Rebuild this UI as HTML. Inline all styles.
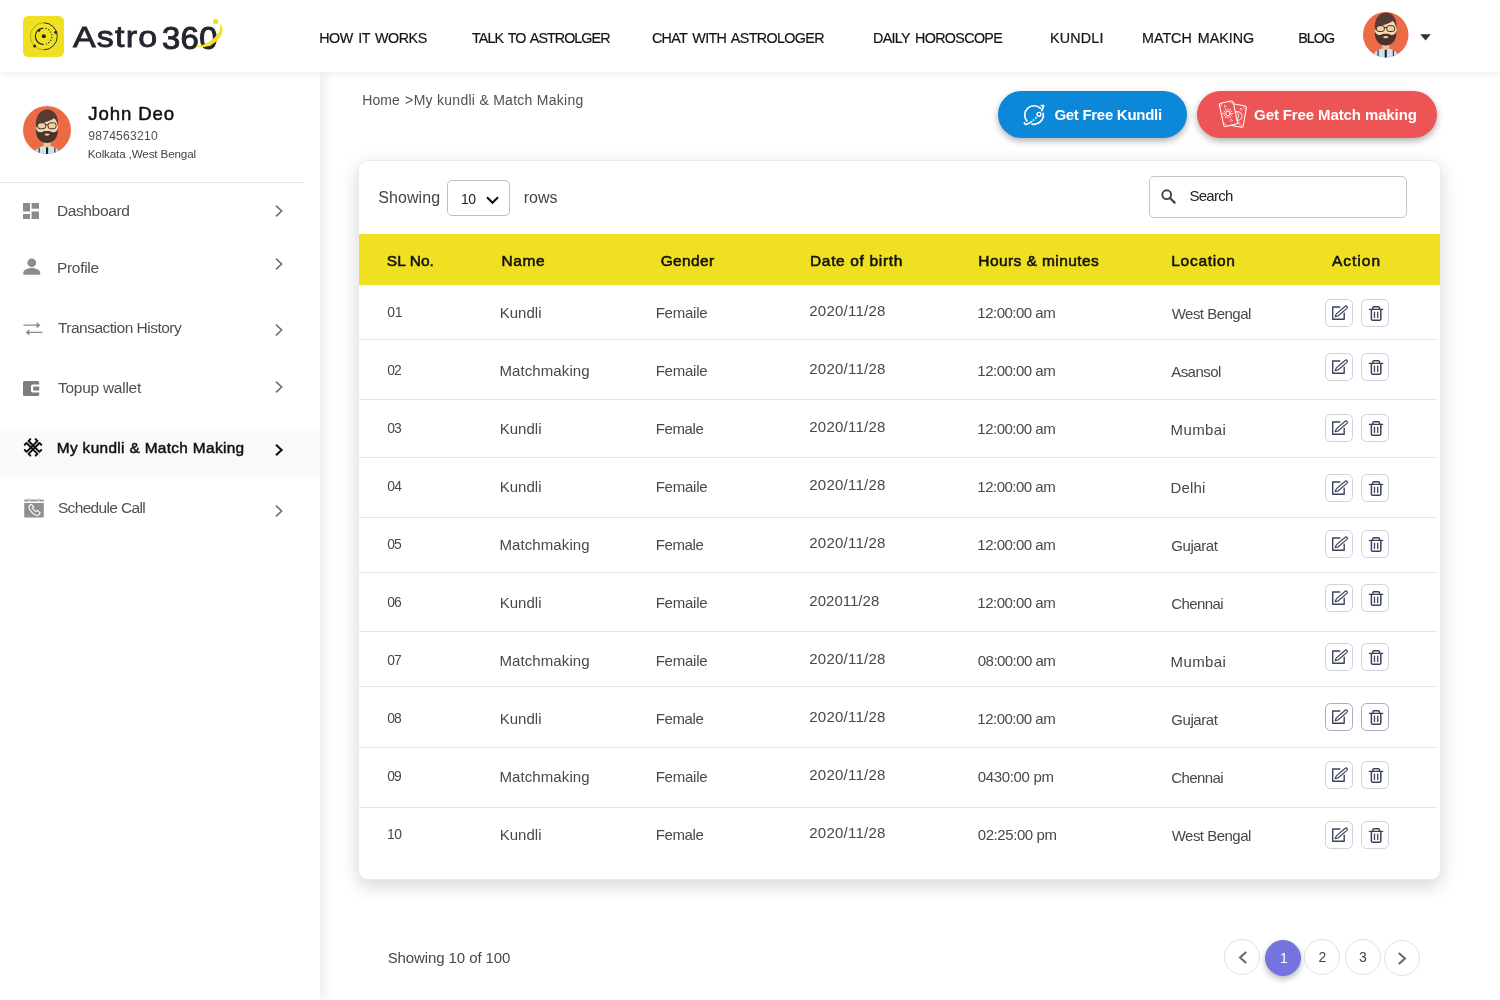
<!DOCTYPE html>
<html lang="en"><head><meta charset="utf-8"><title>Astro 360 - My kundli &amp; Match Making</title>
<style>
*{box-sizing:border-box;margin:0;padding:0}
html,body{width:1500px;height:1000px;overflow:hidden;background:#fff}
body{position:relative;font-family:"Liberation Sans",sans-serif;color:#444}
.t{position:absolute;white-space:nowrap;line-height:1;display:block;text-decoration:none}
.abs{position:absolute}
#side{position:absolute;left:0;top:72px;width:320px;height:928px;background:#fff;box-shadow:4px 0 12px rgba(0,0,0,.08)}
#head{position:absolute;left:0;top:0;width:1500px;height:72px;background:#fff;box-shadow:0 2px 7px rgba(0,0,0,.07)}
#sep{position:absolute;left:0;top:182px;width:304px;height:1px;background:#e4e4e4}
#active{position:absolute;left:0;top:429px;width:320px;height:48px;background:#f9f9f9}
#card{position:absolute;left:358px;top:160px;width:1083px;height:720px;background:#fff;border:1px solid #ececec;border-radius:10px;box-shadow:0 6px 18px rgba(0,0,0,.17)}
#thead{position:absolute;left:359px;top:234px;width:1081px;height:51px;background:#f0e022}
.rl{position:absolute;left:359px;width:1078px;height:1px;background:#e3e4e8}
.btn{position:absolute;height:47px;border-radius:24px;top:91px}
#b1{left:998px;width:189px;background:#0d87d8;box-shadow:0 3px 7px rgba(0,0,0,.32)}
#b2{left:1197px;width:240px;background:#ec5456;box-shadow:0 3px 7px rgba(0,0,0,.32)}
#sel{position:absolute;left:447px;top:180px;width:63px;height:36px;border:1px solid #bebebe;border-radius:5px;background:#fff}
#search{position:absolute;left:1149px;top:176px;width:258px;height:42px;border:1px solid #c6c6c6;border-radius:5px;background:#fff}
.ab{position:absolute;width:28px;height:28px;border:1px solid #cfd2dc;border-radius:5.5px;background:#fff}
.ab.dk{border-color:#a9adbb}
.pg{position:absolute;width:36px;height:36px;border-radius:50%;border:1px solid #e0e0e0;background:#fff}
.pg.on{background:#7473e0;border-color:#7473e0;box-shadow:0 3px 6px rgba(0,0,0,.28)}
svg{position:absolute;overflow:visible}
#tx{position:absolute;left:0;top:0;width:1500px;height:1000px;will-change:transform}

</style></head>
<body>
<div id="side"></div>
<div id="active"></div>
<div id="sep"></div>
<svg style="left:23px;top:106px" width="48" height="48" viewBox="0 0 48 48">
<defs><clipPath id="cpa"><circle cx="24" cy="24" r="24"/></clipPath></defs>
<circle cx="24" cy="24" r="24" fill="#ec6b47"/>
<g clip-path="url(#cpa)"><g transform="translate(0.9 2.9) scale(0.965)">
<path d="M10.5 54V49C10.5 42 16 38.2 24 38.2S37.5 42 37.5 49V54Z" fill="#cfe0ee"/>
<rect x="15.2" y="40.2" width="1.4" height="12" fill="#3d4a5c"/><rect x="31.4" y="40.2" width="1.4" height="12" fill="#3d4a5c"/>
<path d="M20.2 31h7.6v6.6L24 40.6l-3.8-3Z" fill="#f2c596"/>
<rect x="22.9" y="39.8" width="2.2" height="13" fill="#20222a"/>
<ellipse cx="23.8" cy="18.5" rx="11.5" ry="15.5" fill="#f8dab0"/>
<path d="M12.5 19.5C11.2 7 17.3 0.6 24 0.6 31.5 0.6 36.6 7 35.2 18.5 34.8 13.8 33.2 11.2 31.2 9.6 26.5 13.8 17.6 13.2 12.5 19.5Z" fill="#573b34"/>
<path d="M12.4 19.5C12 30 16.6 35.3 23.8 35.3S35.7 30 35.3 19.5C34.6 23 32.3 24.8 29.4 24.2 27.4 22.4 20.4 22.4 18.4 24.2 15.5 24.8 13.1 23 12.4 19.5Z" fill="#4b332d"/>
<ellipse cx="24" cy="26.6" rx="2.7" ry="1.15" fill="#f6c9a0"/>
<rect x="14.2" y="14.4" width="8.4" height="6.2" rx="2.6" fill="#f1cf9f" stroke="#2b2321" stroke-width="0.95"/>
<rect x="25" y="14.4" width="8.4" height="6.2" rx="2.6" fill="#f1cf9f" stroke="#2b2321" stroke-width="0.95"/>
<path d="M22.6 16.4h2.4" stroke="#2b2321" stroke-width="1.1"/>
</g></g></svg>
<svg style="left:23px;top:203px" width="16" height="16" viewBox="0 0 16 16"><path d="M0 0h7v8.6H0zM0 11h7v5H0zM8.6 0H16v5.8H8.6zM8.6 8.4H16V16H8.6z" fill="#8b8b8b"/></svg>
<svg style="left:22.6px;top:257.6px" width="17.5" height="17.5" viewBox="0 0 18 18"><circle cx="9" cy="4.9" r="4.5" fill="#8b8b8b"/><path d="M0.3 17.3V15.2C0.3 11.8 5.5 10.2 9 10.2S17.7 11.8 17.7 15.2V17.3Z" fill="#8b8b8b"/></svg>
<svg style="left:22.5px;top:320px" width="20" height="18" viewBox="0 0 20 18"><path d="M0.5 5.2H15M4.5 12.4H19.5" stroke="#8b8b8b" stroke-width="1.3" fill="none"/><path d="M13.6 2 17.4 5.2 13.6 8.4ZM6.4 9.2 2.6 12.4 6.4 15.6Z" fill="#8b8b8b"/></svg>
<svg style="left:22.8px;top:381px" width="17" height="16" viewBox="0 0 17 16"><path d="M1.6 0H14.6Q16.2 0 16.2 1.6V3.6H9.6Q8 3.6 8 5.2V9.8Q8 11.4 9.6 11.4H16.2V13.4Q16.2 15 14.6 15H1.6Q0 15 0 13.4V1.6Q0 0 1.6 0Z" fill="#7d7d7d"/><rect x="10.2" y="5.6" width="6" height="3.9" fill="#7d7d7d"/></svg>
<svg style="left:23px;top:437px" width="20" height="20" viewBox="0 0 20 20"><g transform="translate(10 10.4) rotate(45)" fill="none" stroke="#111" stroke-width="1.95" stroke-linejoin="round" stroke-linecap="round"><path d="M-7.7 -4.0V-1.4H7.7V-4.0"/><path d="M-4.0 -7.7H-1.4V7.7H-4.0"/><path d="M-7.7 4.0V1.4H7.7V4.0"/><path d="M4.0 -7.7H1.4V7.7H4.0"/></g></svg>
<svg style="left:24px;top:498px" width="20" height="20" viewBox="0 0 20 20"><path d="M1 1.5H19Q19.8 1.5 19.8 2.3V3.6H0.2V2.3Q0.2 1.5 1 1.5Z" fill="#9a9a9a"/><path d="M5.4 0.1V1.5M14.5 0.1V1.5" stroke="#a8a8a8" stroke-width="0.9"/><path d="M5.4 1.5V3.7M14.5 1.5V3.7" stroke="#fff" stroke-width="0.9"/><path d="M0.2 5H19.8V18.8Q19.8 19.6 19 19.6H1Q0.2 19.6 0.2 18.8Z" fill="#909090"/><path d="M7.4 6.4 9.7 8.7 8.4 10.1Q9.6 12.4 11.9 13.6L13.4 12.4 16.1 14.9Q15.4 17.1 13.2 17.5 8.6 16.6 5.5 11 4.6 8.6 5.4 7.6Z" fill="none" stroke="#fff" stroke-width="1.15" stroke-linejoin="round"/></svg>
<svg style="left:274.6px;top:205.2px" width="8" height="12" viewBox="0 0 8 12"><path d="M1 0.7 6.6 6 1 11.3" fill="none" stroke="#737373" stroke-width="1.7"/></svg>
<svg style="left:274.6px;top:257.8px" width="8" height="12" viewBox="0 0 8 12"><path d="M1 0.7 6.6 6 1 11.3" fill="none" stroke="#737373" stroke-width="1.7"/></svg>
<svg style="left:274.6px;top:324.0px" width="8" height="12" viewBox="0 0 8 12"><path d="M1 0.7 6.6 6 1 11.3" fill="none" stroke="#737373" stroke-width="1.7"/></svg>
<svg style="left:274.6px;top:380.8px" width="8" height="12" viewBox="0 0 8 12"><path d="M1 0.7 6.6 6 1 11.3" fill="none" stroke="#737373" stroke-width="1.7"/></svg>
<svg style="left:274.6px;top:444.0px" width="8" height="12" viewBox="0 0 8 12"><path d="M1 0.7 6.6 6 1 11.3" fill="none" stroke="#111" stroke-width="2.1"/></svg>
<svg style="left:274.6px;top:505.2px" width="8" height="12" viewBox="0 0 8 12"><path d="M1 0.7 6.6 6 1 11.3" fill="none" stroke="#737373" stroke-width="1.7"/></svg>
<div id="head"></div>
<div class="abs" style="left:23px;top:16px;width:41px;height:41px;border-radius:5.5px;background:#f0e022"></div>
<svg style="left:23px;top:16px" width="41" height="41" viewBox="0 0 41 41" fill="none">
<path d="M20.8 6.8A13.5 13.5 0 0 1 20.8 33.8" stroke="#23262f" stroke-width="0.95"/>
<path d="M20.8 33.8A13.5 13.5 0 0 1 20.8 6.8" stroke="#23262f" stroke-width="0.5" opacity="0.55"/>
<path d="M20.3 12.1A8.2 8.2 0 0 0 20.8 28.5" stroke="#23262f" stroke-width="1.15"/>
<path d="M22.6 12.3A8.2 8.2 0 0 1 23.2 28.1" stroke="#23262f" stroke-width="1.2" stroke-dasharray="1.15 1.75"/>
<circle cx="20.8" cy="20.3" r="2.05" fill="#23262f"/>
<circle cx="16.1" cy="14.5" r="1.3" fill="#23262f"/><circle cx="32.7" cy="16.2" r="1.55" fill="#23262f"/><circle cx="11.6" cy="30" r="1.55" fill="#23262f"/>
</svg>
<svg style="left:1363px;top:11.5px" width="45.5" height="45.5" viewBox="0 0 48 48">
<defs><clipPath id="cpb"><circle cx="24" cy="24" r="24"/></clipPath></defs>
<circle cx="24" cy="24" r="24" fill="#ec6b47"/>
<g clip-path="url(#cpb)"><g transform="">
<path d="M10.5 54V49C10.5 42 16 38.2 24 38.2S37.5 42 37.5 49V54Z" fill="#cfe0ee"/>
<rect x="15.2" y="40.2" width="1.4" height="12" fill="#3d4a5c"/><rect x="31.4" y="40.2" width="1.4" height="12" fill="#3d4a5c"/>
<path d="M20.2 31h7.6v6.6L24 40.6l-3.8-3Z" fill="#f2c596"/>
<rect x="22.9" y="39.8" width="2.2" height="13" fill="#20222a"/>
<ellipse cx="23.8" cy="18.5" rx="11.5" ry="15.5" fill="#f8dab0"/>
<path d="M12.5 19.5C11.2 7 17.3 0.6 24 0.6 31.5 0.6 36.6 7 35.2 18.5 34.8 13.8 33.2 11.2 31.2 9.6 26.5 13.8 17.6 13.2 12.5 19.5Z" fill="#573b34"/>
<path d="M12.4 19.5C12 30 16.6 35.3 23.8 35.3S35.7 30 35.3 19.5C34.6 23 32.3 24.8 29.4 24.2 27.4 22.4 20.4 22.4 18.4 24.2 15.5 24.8 13.1 23 12.4 19.5Z" fill="#4b332d"/>
<ellipse cx="24" cy="26.6" rx="2.7" ry="1.15" fill="#f6c9a0"/>
<rect x="14.2" y="14.4" width="8.4" height="6.2" rx="2.6" fill="#f1cf9f" stroke="#2b2321" stroke-width="0.95"/>
<rect x="25" y="14.4" width="8.4" height="6.2" rx="2.6" fill="#f1cf9f" stroke="#2b2321" stroke-width="0.95"/>
<path d="M22.6 16.4h2.4" stroke="#2b2321" stroke-width="1.1"/>
</g></g></svg>
<svg style="left:1420px;top:34px" width="11" height="7" viewBox="0 0 11 7"><path d="M0.2 0.2H10.8L5.5 6.4Z" fill="#333"/></svg>
<div class="btn" id="b1"></div><div class="btn" id="b2"></div>
<svg style="left:1015px;top:98px" width="40" height="34" viewBox="0 0 40 34" fill="none" stroke="#fff" stroke-width="1.7" stroke-linecap="round" stroke-linejoin="round">
<path d="M25.34 10.2A9.3 9.3 0 0 0 11.88 22.98"/><path d="M28.16 15.39A9.3 9.3 0 0 1 17.07 26.1"/>
<path d="M26.4 7.5 28.6 7.7 26.8 12.6"/>
<path d="M9.4 24.9Q10 26.9 11.8 26.3 14.6 25.3 16.6 23.6"/>
<circle cx="23.95" cy="16.3" r="1.9" stroke-width="1.35"/>
<circle cx="20.9" cy="19.9" r="0.95" fill="#fff" stroke="none"/><circle cx="18.5" cy="22.1" r="0.9" fill="#fff" stroke="none"/>
</svg>
<svg style="left:1218px;top:100px" width="30" height="29" viewBox="0 0 30 29" fill="none" stroke="#fff" stroke-width="1.05" stroke-linejoin="round" stroke-linecap="round">
<path d="M16.4 4 27 6Q28.6 6.3 28.3 7.9L25.2 26Q24.9 27.6 23.3 27.3L12.2 25.3"/>
<path d="M2.8 3.3 13.2 1.1Q14.8 0.8 15.2 2.4L19.5 22Q19.9 23.6 18.3 24L7.7 26.4Q6.1 26.8 5.7 25.2L1.5 5.3Q1.1 3.7 2.8 3.3Z"/>
<circle cx="9.9" cy="13.4" r="2.25" stroke-width="1"/>
<path d="M13.30 13.40L15.00 13.40M12.84 15.10L13.88 15.70M11.60 16.34L12.45 17.82M9.90 16.80L9.90 18.00M8.20 16.34L7.35 17.82M6.96 15.10L5.92 15.70M6.50 13.40L4.80 13.40M6.96 11.70L5.92 11.10M8.20 10.46L7.35 8.98M9.90 10.00L9.90 8.80M11.60 10.46L12.45 8.98M12.84 11.70L13.88 11.10" stroke-width="0.85"/>
<path d="M18.3 11.6C22.6 11 25.2 14.6 23.6 18 22.6 20 20.6 20.6 18.9 20.2M18.3 11.6C21.4 13.6 21.6 17.4 18.9 19.4" stroke-width="0.95"/>
<path d="M13.5 19.5L14.5 20.5L13.5 21.5L12.5 20.5ZM23.3 8.4L24.3 9.4L23.3 10.4L22.3 9.4ZM7.2 5.5L8.1 6.4L7.2 7.300000000000001L6.3 6.4ZM21.2 22.6L22.099999999999998 23.5L21.2 24.4L20.3 23.5Z" stroke-width="0.7"/>
<path d="M2.3 6.2Q3.4 6.4 3.9 4.2M12.6 2.2Q13.2 3.6 14.6 3M6.3 23.4Q7.6 23.4 8.2 25.2M25.4 7.2Q25.6 8.8 27.3 8.7M22.6 26Q22.9 24.6 24.4 24.8" stroke-width="0.6"/>
</svg>
<div id="card"></div>
<div id="sel"></div>
<svg style="left:486px;top:195.8px" width="13" height="9" viewBox="0 0 13 9"><path d="M1 1.2 6.5 6.8 12 1.2" fill="none" stroke="#111" stroke-width="2.1"/></svg>
<div id="search"></div>
<svg style="left:1160.5px;top:189px" width="15" height="15" viewBox="0 0 15 15"><circle cx="5.7" cy="5.7" r="4.4" fill="none" stroke="#444" stroke-width="1.9"/><path d="M9 9 13.6 13.6" stroke="#444" stroke-width="2.2" stroke-linecap="round"/></svg>
<div id="thead"></div>
<div class="rl" style="top:339px"></div>
<div class="rl" style="top:399px"></div>
<div class="rl" style="top:457px"></div>
<div class="rl" style="top:517px"></div>
<div class="rl" style="top:572px"></div>
<div class="rl" style="top:631px"></div>
<div class="rl" style="top:686px"></div>
<div class="rl" style="top:747px"></div>
<div class="rl" style="top:807px"></div>
<div class="ab" style="left:1325px;top:299px"><svg style="left:-1px;top:-1px" width="28" height="28" viewBox="0 0 28 28" fill="none" stroke="#3b425b" stroke-linecap="round" stroke-linejoin="round"><path d="M14.8 8H7.7V20.2H19.2V14.3" stroke-width="1.4"/><path d="M10.2 17.7 11.3 14.9 20.2 7.3Q21.2 6.6 22.1 7.5 22.9 8.5 21.9 9.4L13 17Z" stroke-width="1.2" fill="#fff"/></svg></div>
<div class="ab" style="left:1361px;top:299px"><svg style="left:-1px;top:-1px" width="28" height="28" viewBox="0 0 28 28" fill="none" stroke="#3b425b" stroke-linecap="round" stroke-linejoin="round"><path d="M8.4 10.35H21.7" stroke-width="1.4"/><path d="M11.9 10.2V8.6Q11.9 7.7 12.8 7.7H17.5Q18.4 7.7 18.4 8.6V10.2" stroke-width="1.4"/><path d="M10.4 10.5V20Q10.4 21.3 11.7 21.3H18.5Q19.8 21.3 19.8 20V10.5" stroke-width="1.5"/><path d="M13.5 13.2V18.5M16.7 13.2V18.5" stroke-width="1.3"/></svg></div>
<div class="ab" style="left:1325px;top:353px"><svg style="left:-1px;top:-1px" width="28" height="28" viewBox="0 0 28 28" fill="none" stroke="#3b425b" stroke-linecap="round" stroke-linejoin="round"><path d="M14.8 8H7.7V20.2H19.2V14.3" stroke-width="1.4"/><path d="M10.2 17.7 11.3 14.9 20.2 7.3Q21.2 6.6 22.1 7.5 22.9 8.5 21.9 9.4L13 17Z" stroke-width="1.2" fill="#fff"/></svg></div>
<div class="ab" style="left:1361px;top:353px"><svg style="left:-1px;top:-1px" width="28" height="28" viewBox="0 0 28 28" fill="none" stroke="#3b425b" stroke-linecap="round" stroke-linejoin="round"><path d="M8.4 10.35H21.7" stroke-width="1.4"/><path d="M11.9 10.2V8.6Q11.9 7.7 12.8 7.7H17.5Q18.4 7.7 18.4 8.6V10.2" stroke-width="1.4"/><path d="M10.4 10.5V20Q10.4 21.3 11.7 21.3H18.5Q19.8 21.3 19.8 20V10.5" stroke-width="1.5"/><path d="M13.5 13.2V18.5M16.7 13.2V18.5" stroke-width="1.3"/></svg></div>
<div class="ab" style="left:1325px;top:414px"><svg style="left:-1px;top:-1px" width="28" height="28" viewBox="0 0 28 28" fill="none" stroke="#3b425b" stroke-linecap="round" stroke-linejoin="round"><path d="M14.8 8H7.7V20.2H19.2V14.3" stroke-width="1.4"/><path d="M10.2 17.7 11.3 14.9 20.2 7.3Q21.2 6.6 22.1 7.5 22.9 8.5 21.9 9.4L13 17Z" stroke-width="1.2" fill="#fff"/></svg></div>
<div class="ab" style="left:1361px;top:414px"><svg style="left:-1px;top:-1px" width="28" height="28" viewBox="0 0 28 28" fill="none" stroke="#3b425b" stroke-linecap="round" stroke-linejoin="round"><path d="M8.4 10.35H21.7" stroke-width="1.4"/><path d="M11.9 10.2V8.6Q11.9 7.7 12.8 7.7H17.5Q18.4 7.7 18.4 8.6V10.2" stroke-width="1.4"/><path d="M10.4 10.5V20Q10.4 21.3 11.7 21.3H18.5Q19.8 21.3 19.8 20V10.5" stroke-width="1.5"/><path d="M13.5 13.2V18.5M16.7 13.2V18.5" stroke-width="1.3"/></svg></div>
<div class="ab" style="left:1325px;top:474px"><svg style="left:-1px;top:-1px" width="28" height="28" viewBox="0 0 28 28" fill="none" stroke="#3b425b" stroke-linecap="round" stroke-linejoin="round"><path d="M14.8 8H7.7V20.2H19.2V14.3" stroke-width="1.4"/><path d="M10.2 17.7 11.3 14.9 20.2 7.3Q21.2 6.6 22.1 7.5 22.9 8.5 21.9 9.4L13 17Z" stroke-width="1.2" fill="#fff"/></svg></div>
<div class="ab" style="left:1361px;top:474px"><svg style="left:-1px;top:-1px" width="28" height="28" viewBox="0 0 28 28" fill="none" stroke="#3b425b" stroke-linecap="round" stroke-linejoin="round"><path d="M8.4 10.35H21.7" stroke-width="1.4"/><path d="M11.9 10.2V8.6Q11.9 7.7 12.8 7.7H17.5Q18.4 7.7 18.4 8.6V10.2" stroke-width="1.4"/><path d="M10.4 10.5V20Q10.4 21.3 11.7 21.3H18.5Q19.8 21.3 19.8 20V10.5" stroke-width="1.5"/><path d="M13.5 13.2V18.5M16.7 13.2V18.5" stroke-width="1.3"/></svg></div>
<div class="ab" style="left:1325px;top:530px"><svg style="left:-1px;top:-1px" width="28" height="28" viewBox="0 0 28 28" fill="none" stroke="#3b425b" stroke-linecap="round" stroke-linejoin="round"><path d="M14.8 8H7.7V20.2H19.2V14.3" stroke-width="1.4"/><path d="M10.2 17.7 11.3 14.9 20.2 7.3Q21.2 6.6 22.1 7.5 22.9 8.5 21.9 9.4L13 17Z" stroke-width="1.2" fill="#fff"/></svg></div>
<div class="ab" style="left:1361px;top:530px"><svg style="left:-1px;top:-1px" width="28" height="28" viewBox="0 0 28 28" fill="none" stroke="#3b425b" stroke-linecap="round" stroke-linejoin="round"><path d="M8.4 10.35H21.7" stroke-width="1.4"/><path d="M11.9 10.2V8.6Q11.9 7.7 12.8 7.7H17.5Q18.4 7.7 18.4 8.6V10.2" stroke-width="1.4"/><path d="M10.4 10.5V20Q10.4 21.3 11.7 21.3H18.5Q19.8 21.3 19.8 20V10.5" stroke-width="1.5"/><path d="M13.5 13.2V18.5M16.7 13.2V18.5" stroke-width="1.3"/></svg></div>
<div class="ab" style="left:1325px;top:584px"><svg style="left:-1px;top:-1px" width="28" height="28" viewBox="0 0 28 28" fill="none" stroke="#3b425b" stroke-linecap="round" stroke-linejoin="round"><path d="M14.8 8H7.7V20.2H19.2V14.3" stroke-width="1.4"/><path d="M10.2 17.7 11.3 14.9 20.2 7.3Q21.2 6.6 22.1 7.5 22.9 8.5 21.9 9.4L13 17Z" stroke-width="1.2" fill="#fff"/></svg></div>
<div class="ab" style="left:1361px;top:584px"><svg style="left:-1px;top:-1px" width="28" height="28" viewBox="0 0 28 28" fill="none" stroke="#3b425b" stroke-linecap="round" stroke-linejoin="round"><path d="M8.4 10.35H21.7" stroke-width="1.4"/><path d="M11.9 10.2V8.6Q11.9 7.7 12.8 7.7H17.5Q18.4 7.7 18.4 8.6V10.2" stroke-width="1.4"/><path d="M10.4 10.5V20Q10.4 21.3 11.7 21.3H18.5Q19.8 21.3 19.8 20V10.5" stroke-width="1.5"/><path d="M13.5 13.2V18.5M16.7 13.2V18.5" stroke-width="1.3"/></svg></div>
<div class="ab" style="left:1325px;top:643px"><svg style="left:-1px;top:-1px" width="28" height="28" viewBox="0 0 28 28" fill="none" stroke="#3b425b" stroke-linecap="round" stroke-linejoin="round"><path d="M14.8 8H7.7V20.2H19.2V14.3" stroke-width="1.4"/><path d="M10.2 17.7 11.3 14.9 20.2 7.3Q21.2 6.6 22.1 7.5 22.9 8.5 21.9 9.4L13 17Z" stroke-width="1.2" fill="#fff"/></svg></div>
<div class="ab" style="left:1361px;top:643px"><svg style="left:-1px;top:-1px" width="28" height="28" viewBox="0 0 28 28" fill="none" stroke="#3b425b" stroke-linecap="round" stroke-linejoin="round"><path d="M8.4 10.35H21.7" stroke-width="1.4"/><path d="M11.9 10.2V8.6Q11.9 7.7 12.8 7.7H17.5Q18.4 7.7 18.4 8.6V10.2" stroke-width="1.4"/><path d="M10.4 10.5V20Q10.4 21.3 11.7 21.3H18.5Q19.8 21.3 19.8 20V10.5" stroke-width="1.5"/><path d="M13.5 13.2V18.5M16.7 13.2V18.5" stroke-width="1.3"/></svg></div>
<div class="ab dk" style="left:1325px;top:703px"><svg style="left:-1px;top:-1px" width="28" height="28" viewBox="0 0 28 28" fill="none" stroke="#3b425b" stroke-linecap="round" stroke-linejoin="round"><path d="M14.8 8H7.7V20.2H19.2V14.3" stroke-width="1.4"/><path d="M10.2 17.7 11.3 14.9 20.2 7.3Q21.2 6.6 22.1 7.5 22.9 8.5 21.9 9.4L13 17Z" stroke-width="1.2" fill="#fff"/></svg></div>
<div class="ab dk" style="left:1361px;top:703px"><svg style="left:-1px;top:-1px" width="28" height="28" viewBox="0 0 28 28" fill="none" stroke="#3b425b" stroke-linecap="round" stroke-linejoin="round"><path d="M8.4 10.35H21.7" stroke-width="1.4"/><path d="M11.9 10.2V8.6Q11.9 7.7 12.8 7.7H17.5Q18.4 7.7 18.4 8.6V10.2" stroke-width="1.4"/><path d="M10.4 10.5V20Q10.4 21.3 11.7 21.3H18.5Q19.8 21.3 19.8 20V10.5" stroke-width="1.5"/><path d="M13.5 13.2V18.5M16.7 13.2V18.5" stroke-width="1.3"/></svg></div>
<div class="ab" style="left:1325px;top:761px"><svg style="left:-1px;top:-1px" width="28" height="28" viewBox="0 0 28 28" fill="none" stroke="#3b425b" stroke-linecap="round" stroke-linejoin="round"><path d="M14.8 8H7.7V20.2H19.2V14.3" stroke-width="1.4"/><path d="M10.2 17.7 11.3 14.9 20.2 7.3Q21.2 6.6 22.1 7.5 22.9 8.5 21.9 9.4L13 17Z" stroke-width="1.2" fill="#fff"/></svg></div>
<div class="ab" style="left:1361px;top:761px"><svg style="left:-1px;top:-1px" width="28" height="28" viewBox="0 0 28 28" fill="none" stroke="#3b425b" stroke-linecap="round" stroke-linejoin="round"><path d="M8.4 10.35H21.7" stroke-width="1.4"/><path d="M11.9 10.2V8.6Q11.9 7.7 12.8 7.7H17.5Q18.4 7.7 18.4 8.6V10.2" stroke-width="1.4"/><path d="M10.4 10.5V20Q10.4 21.3 11.7 21.3H18.5Q19.8 21.3 19.8 20V10.5" stroke-width="1.5"/><path d="M13.5 13.2V18.5M16.7 13.2V18.5" stroke-width="1.3"/></svg></div>
<div class="ab" style="left:1325px;top:821px"><svg style="left:-1px;top:-1px" width="28" height="28" viewBox="0 0 28 28" fill="none" stroke="#3b425b" stroke-linecap="round" stroke-linejoin="round"><path d="M14.8 8H7.7V20.2H19.2V14.3" stroke-width="1.4"/><path d="M10.2 17.7 11.3 14.9 20.2 7.3Q21.2 6.6 22.1 7.5 22.9 8.5 21.9 9.4L13 17Z" stroke-width="1.2" fill="#fff"/></svg></div>
<div class="ab" style="left:1361px;top:821px"><svg style="left:-1px;top:-1px" width="28" height="28" viewBox="0 0 28 28" fill="none" stroke="#3b425b" stroke-linecap="round" stroke-linejoin="round"><path d="M8.4 10.35H21.7" stroke-width="1.4"/><path d="M11.9 10.2V8.6Q11.9 7.7 12.8 7.7H17.5Q18.4 7.7 18.4 8.6V10.2" stroke-width="1.4"/><path d="M10.4 10.5V20Q10.4 21.3 11.7 21.3H18.5Q19.8 21.3 19.8 20V10.5" stroke-width="1.5"/><path d="M13.5 13.2V18.5M16.7 13.2V18.5" stroke-width="1.3"/></svg></div>
<div class="pg" style="left:1224px;top:939px"></div>
<div class="pg on" style="left:1265px;top:940px"></div>
<div class="pg" style="left:1304px;top:939px"></div>
<div class="pg" style="left:1345px;top:939px"></div>
<div class="pg" style="left:1384px;top:940px"></div>
<svg style="left:1237.6px;top:951px" width="10" height="13" viewBox="0 0 10 13"><path d="M8.2 1 2 6.5 8.2 12" fill="none" stroke="#666" stroke-width="2"/></svg>
<svg style="left:1397px;top:952px" width="10" height="13" viewBox="0 0 10 13"><path d="M1.8 1 8 6.5 1.8 12" fill="none" stroke="#666" stroke-width="2"/></svg>
<div id="tx">
<header>
<div class="logo">
<span class="t" style="left:73.00px;top:22.00px;font-size:29.9px;color:#23262f;letter-spacing:1.004px;-webkit-text-stroke:0.8px #23262f;transform:scaleX(1.14);transform-origin:0 0;">Astro</span>
<span class="t" style="left:161.94px;top:23.00px;font-size:31.0px;color:#23262f;letter-spacing:0.325px;-webkit-text-stroke:1.0px #23262f;transform:scaleX(1.06);transform-origin:0 0;">360</span>
</div>
<nav>
<a class="t" href="#" style="left:319.20px;top:31.00px;font-size:14.3px;color:#151515;letter-spacing:-0.488px;word-spacing:2.0px;-webkit-text-stroke:0.2px #151515;">HOW IT WORKS</a>
<a class="t" href="#" style="left:472.10px;top:31.00px;font-size:14.3px;color:#151515;letter-spacing:-0.937px;word-spacing:2.0px;-webkit-text-stroke:0.2px #151515;">TALK TO ASTROLGER</a>
<a class="t" href="#" style="left:651.90px;top:31.00px;font-size:14.3px;color:#151515;letter-spacing:-0.632px;word-spacing:2.0px;-webkit-text-stroke:0.2px #151515;">CHAT WITH ASTROLOGER</a>
<a class="t" href="#" style="left:873.00px;top:31.00px;font-size:14.3px;color:#151515;letter-spacing:-0.653px;word-spacing:2.0px;-webkit-text-stroke:0.2px #151515;">DAILY HOROSCOPE</a>
<a class="t" href="#" style="left:1049.90px;top:31.00px;font-size:14.3px;color:#151515;letter-spacing:0.228px;word-spacing:2.0px;-webkit-text-stroke:0.2px #151515;">KUNDLI</a>
<a class="t" href="#" style="left:1142.00px;top:31.00px;font-size:14.3px;color:#151515;word-spacing:2.0px;-webkit-text-stroke:0.2px #151515;">MATCH MAKING</a>
<a class="t" href="#" style="left:1298.20px;top:31.00px;font-size:14.3px;color:#151515;letter-spacing:-0.936px;word-spacing:2.0px;-webkit-text-stroke:0.2px #151515;">BLOG</a>
</nav>
</header>
<aside>
<div class="profile">
<span class="t" style="left:88.30px;top:105.00px;font-size:18.6px;color:#111;letter-spacing:0.878px;-webkit-text-stroke:0.5px #111;">John Deo</span>
<span class="t" style="left:88.30px;top:130.00px;font-size:12.1px;color:#505050;letter-spacing:0.230px;">9874563210</span>
<span class="t" style="left:87.70px;top:148.00px;font-size:11.7px;color:#444;letter-spacing:-0.165px;">Kolkata ,West Bengal</span>
</div>
<nav class="menu">
<a class="t" href="#" style="left:56.90px;top:203.00px;font-size:15.5px;color:#4f4f4f;letter-spacing:-0.363px;">Dashboard</a>
<a class="t" href="#" style="left:56.90px;top:260.00px;font-size:15.5px;color:#4f4f4f;letter-spacing:-0.286px;">Profile</a>
<a class="t" href="#" style="left:57.90px;top:320.00px;font-size:15.5px;color:#4f4f4f;letter-spacing:-0.505px;">Transaction History</a>
<a class="t" href="#" style="left:57.90px;top:380.00px;font-size:15.5px;color:#4f4f4f;letter-spacing:-0.251px;">Topup wallet</a>
<a class="t" href="#" style="left:56.80px;top:440.00px;font-size:15.4px;color:#111;letter-spacing:0.336px;-webkit-text-stroke:0.5px #111;">My kundli &amp; Match Making</a>
<a class="t" href="#" style="left:57.90px;top:500.00px;font-size:15.5px;color:#4f4f4f;letter-spacing:-0.658px;">Schedule Call</a>
</nav>
</aside>
<main>
<div class="breadcrumb">
<span class="t" style="left:362.30px;top:93.00px;font-size:14px;color:#505050;letter-spacing:0.047px;">Home</span>
<span class="t" style="left:405.00px;top:93.00px;font-size:14px;color:#505050;">&gt;</span>
<span class="t" style="left:413.70px;top:93.00px;font-size:14px;color:#505050;letter-spacing:0.269px;">My kundli &amp; Match Making</span>
</div>
<div class="actions">
<a class="t" href="#" style="left:1054.40px;top:107.00px;font-size:15px;color:#fff;font-weight:700;letter-spacing:-0.287px;">Get Free Kundli</a>
<a class="t" href="#" style="left:1254.10px;top:107.00px;font-size:15px;color:#fff;font-weight:700;letter-spacing:-0.114px;">Get Free Match making</a>
</div>
<section class="listing">
<div class="controls">
<span class="t" style="left:378.30px;top:190.00px;font-size:16px;color:#444;letter-spacing:0.071px;">Showing</span>
<span class="t" style="left:461.00px;top:192.00px;font-size:14px;color:#222;letter-spacing:-0.486px;">10</span>
<span class="t" style="left:523.70px;top:190.00px;font-size:16px;color:#444;letter-spacing:0.006px;">rows</span>
<span class="t" style="left:1189.40px;top:188.00px;font-size:15px;color:#222;letter-spacing:-0.717px;">Search</span>
</div>
<div class="table" role="table">
<div class="thead" role="row">
<span class="t" style="left:386.80px;top:253.00px;font-size:15.5px;color:#111;letter-spacing:0.064px;-webkit-text-stroke:0.55px #111;">SL No.</span>
<span class="t" style="left:501.50px;top:253.00px;font-size:15.5px;color:#111;letter-spacing:0.558px;-webkit-text-stroke:0.55px #111;">Name</span>
<span class="t" style="left:660.70px;top:253.00px;font-size:15.5px;color:#111;letter-spacing:0.352px;-webkit-text-stroke:0.55px #111;">Gender</span>
<span class="t" style="left:810.00px;top:253.00px;font-size:15.5px;color:#111;letter-spacing:0.657px;-webkit-text-stroke:0.55px #111;">Date of birth</span>
<span class="t" style="left:978.30px;top:253.00px;font-size:15.5px;color:#111;letter-spacing:0.420px;-webkit-text-stroke:0.55px #111;">Hours &amp; minutes</span>
<span class="t" style="left:1171.30px;top:253.00px;font-size:15.5px;color:#111;letter-spacing:0.703px;-webkit-text-stroke:0.55px #111;">Location</span>
<span class="t" style="left:1332.00px;top:253.00px;font-size:15.5px;color:#111;letter-spacing:0.988px;-webkit-text-stroke:0.55px #111;">Action</span>
</div>
<div class="tr" role="row">
<span class="t" style="left:387.30px;top:306.00px;font-size:13.9px;color:#484848;letter-spacing:-0.152px;">01</span>
<span class="t" style="left:499.70px;top:305.00px;font-size:15.0px;color:#484848;letter-spacing:0.027px;">Kundli</span>
<span class="t" style="left:655.70px;top:305.00px;font-size:15.0px;color:#484848;letter-spacing:-0.235px;">Femaile</span>
<span class="t" style="left:809.30px;top:303.00px;font-size:15.0px;color:#484848;letter-spacing:0.231px;">2020/11/28</span>
<span class="t" style="left:977.30px;top:305.00px;font-size:15.0px;color:#484848;letter-spacing:-0.500px;">12:00:00 am</span>
<span class="t" style="left:1171.70px;top:306.00px;font-size:15.0px;color:#484848;letter-spacing:-0.514px;">West Bengal</span>
</div>
<div class="tr" role="row">
<span class="t" style="left:387.30px;top:364.00px;font-size:13.9px;color:#484848;letter-spacing:-1.025px;">02</span>
<span class="t" style="left:499.40px;top:363.00px;font-size:15.0px;color:#484848;letter-spacing:0.104px;">Matchmaking</span>
<span class="t" style="left:655.70px;top:363.00px;font-size:15.0px;color:#484848;letter-spacing:-0.235px;">Femaile</span>
<span class="t" style="left:809.30px;top:361.00px;font-size:15.0px;color:#484848;letter-spacing:0.231px;">2020/11/28</span>
<span class="t" style="left:977.30px;top:363.00px;font-size:15.0px;color:#484848;letter-spacing:-0.500px;">12:00:00 am</span>
<span class="t" style="left:1171.20px;top:364.00px;font-size:15.0px;color:#484848;letter-spacing:-0.539px;">Asansol</span>
</div>
<div class="tr" role="row">
<span class="t" style="left:387.30px;top:422.00px;font-size:13.9px;color:#484848;letter-spacing:-1.025px;">03</span>
<span class="t" style="left:499.70px;top:421.00px;font-size:15.0px;color:#484848;letter-spacing:0.027px;">Kundli</span>
<span class="t" style="left:655.70px;top:421.00px;font-size:15.0px;color:#484848;letter-spacing:-0.355px;">Female</span>
<span class="t" style="left:809.30px;top:419.00px;font-size:15.0px;color:#484848;letter-spacing:0.231px;">2020/11/28</span>
<span class="t" style="left:977.30px;top:421.00px;font-size:15.0px;color:#484848;letter-spacing:-0.500px;">12:00:00 am</span>
<span class="t" style="left:1170.60px;top:422.00px;font-size:15.0px;color:#484848;letter-spacing:0.357px;">Mumbai</span>
</div>
<div class="tr" role="row">
<span class="t" style="left:387.30px;top:480.00px;font-size:13.9px;color:#484848;letter-spacing:-0.825px;">04</span>
<span class="t" style="left:499.70px;top:479.00px;font-size:15.0px;color:#484848;letter-spacing:0.027px;">Kundli</span>
<span class="t" style="left:655.70px;top:479.00px;font-size:15.0px;color:#484848;letter-spacing:-0.235px;">Femaile</span>
<span class="t" style="left:809.30px;top:477.00px;font-size:15.0px;color:#484848;letter-spacing:0.231px;">2020/11/28</span>
<span class="t" style="left:977.30px;top:479.00px;font-size:15.0px;color:#484848;letter-spacing:-0.500px;">12:00:00 am</span>
<span class="t" style="left:1170.60px;top:480.00px;font-size:15.0px;color:#484848;letter-spacing:0.138px;">Delhi</span>
</div>
<div class="tr" role="row">
<span class="t" style="left:387.30px;top:538.00px;font-size:13.9px;color:#484848;letter-spacing:-1.025px;">05</span>
<span class="t" style="left:499.40px;top:537.00px;font-size:15.0px;color:#484848;letter-spacing:0.104px;">Matchmaking</span>
<span class="t" style="left:655.70px;top:537.00px;font-size:15.0px;color:#484848;letter-spacing:-0.355px;">Female</span>
<span class="t" style="left:809.30px;top:535.00px;font-size:15.0px;color:#484848;letter-spacing:0.231px;">2020/11/28</span>
<span class="t" style="left:977.30px;top:537.00px;font-size:15.0px;color:#484848;letter-spacing:-0.500px;">12:00:00 am</span>
<span class="t" style="left:1171.20px;top:538.00px;font-size:15.0px;color:#484848;letter-spacing:-0.404px;">Gujarat</span>
</div>
<div class="tr" role="row">
<span class="t" style="left:387.30px;top:596.00px;font-size:13.9px;color:#484848;letter-spacing:-1.025px;">06</span>
<span class="t" style="left:499.70px;top:595.00px;font-size:15.0px;color:#484848;letter-spacing:0.027px;">Kundli</span>
<span class="t" style="left:655.70px;top:595.00px;font-size:15.0px;color:#484848;letter-spacing:-0.235px;">Femaile</span>
<span class="t" style="left:809.30px;top:593.00px;font-size:15.0px;color:#484848;letter-spacing:0.019px;">202011/28</span>
<span class="t" style="left:977.30px;top:595.00px;font-size:15.0px;color:#484848;letter-spacing:-0.500px;">12:00:00 am</span>
<span class="t" style="left:1171.20px;top:596.00px;font-size:15.0px;color:#484848;letter-spacing:-0.574px;">Chennai</span>
</div>
<div class="tr" role="row">
<span class="t" style="left:387.30px;top:654.00px;font-size:13.9px;color:#484848;letter-spacing:-1.025px;">07</span>
<span class="t" style="left:499.40px;top:653.00px;font-size:15.0px;color:#484848;letter-spacing:0.104px;">Matchmaking</span>
<span class="t" style="left:655.70px;top:653.00px;font-size:15.0px;color:#484848;letter-spacing:-0.235px;">Femaile</span>
<span class="t" style="left:809.30px;top:651.00px;font-size:15.0px;color:#484848;letter-spacing:0.231px;">2020/11/28</span>
<span class="t" style="left:977.80px;top:653.00px;font-size:15.0px;color:#484848;letter-spacing:-0.550px;">08:00:00 am</span>
<span class="t" style="left:1170.60px;top:654.00px;font-size:15.0px;color:#484848;letter-spacing:0.357px;">Mumbai</span>
</div>
<div class="tr" role="row">
<span class="t" style="left:387.30px;top:712.00px;font-size:13.9px;color:#484848;letter-spacing:-1.025px;">08</span>
<span class="t" style="left:499.70px;top:711.00px;font-size:15.0px;color:#484848;letter-spacing:0.027px;">Kundli</span>
<span class="t" style="left:655.70px;top:711.00px;font-size:15.0px;color:#484848;letter-spacing:-0.355px;">Female</span>
<span class="t" style="left:809.30px;top:709.00px;font-size:15.0px;color:#484848;letter-spacing:0.231px;">2020/11/28</span>
<span class="t" style="left:977.30px;top:711.00px;font-size:15.0px;color:#484848;letter-spacing:-0.500px;">12:00:00 am</span>
<span class="t" style="left:1171.20px;top:712.00px;font-size:15.0px;color:#484848;letter-spacing:-0.404px;">Gujarat</span>
</div>
<div class="tr" role="row">
<span class="t" style="left:387.30px;top:770.00px;font-size:13.9px;color:#484848;letter-spacing:-1.025px;">09</span>
<span class="t" style="left:499.40px;top:769.00px;font-size:15.0px;color:#484848;letter-spacing:0.104px;">Matchmaking</span>
<span class="t" style="left:655.70px;top:769.00px;font-size:15.0px;color:#484848;letter-spacing:-0.235px;">Femaile</span>
<span class="t" style="left:809.30px;top:767.00px;font-size:15.0px;color:#484848;letter-spacing:0.231px;">2020/11/28</span>
<span class="t" style="left:977.80px;top:769.00px;font-size:15.0px;color:#484848;letter-spacing:-0.348px;">0430:00 pm</span>
<span class="t" style="left:1171.20px;top:770.00px;font-size:15.0px;color:#484848;letter-spacing:-0.574px;">Chennai</span>
</div>
<div class="tr" role="row">
<span class="t" style="left:387.00px;top:828.00px;font-size:13.9px;color:#484848;letter-spacing:-0.525px;">10</span>
<span class="t" style="left:499.70px;top:827.00px;font-size:15.0px;color:#484848;letter-spacing:0.027px;">Kundli</span>
<span class="t" style="left:655.70px;top:827.00px;font-size:15.0px;color:#484848;letter-spacing:-0.355px;">Female</span>
<span class="t" style="left:809.30px;top:825.00px;font-size:15.0px;color:#484848;letter-spacing:0.231px;">2020/11/28</span>
<span class="t" style="left:977.80px;top:827.00px;font-size:15.0px;color:#484848;letter-spacing:-0.430px;">02:25:00 pm</span>
<span class="t" style="left:1171.70px;top:828.00px;font-size:15.0px;color:#484848;letter-spacing:-0.514px;">West Bengal</span>
</div>
</div>
</section>
<footer>
<span class="t" style="left:387.70px;top:950.00px;font-size:15px;color:#484848;letter-spacing:-0.101px;">Showing 10 of 100</span>
<nav class="pager">
<a class="t" href="#" style="left:1279.90px;top:951.00px;font-size:14px;color:#fff;">1</a>
<a class="t" href="#" style="left:1318.40px;top:950.00px;font-size:14px;color:#444;">2</a>
<a class="t" href="#" style="left:1358.90px;top:950.00px;font-size:14px;color:#444;">3</a>
</nav>
</footer>
</main>
</div>
<svg style="left:0;top:0" width="240" height="72" viewBox="0 0 240 72"><path d="M195.4 46C204.3 49.4 213.6 45.2 219 38.6 222.8 33.8 224.2 27.8 219.6 23.3 221.4 28.5 219.2 32.8 215.8 36.2 210.7 41.7 204 45.8 195.4 46Z" fill="#f2e21d"/><circle cx="215.7" cy="21.4" r="2.7" fill="#f0e022"/></svg>
</body></html>
